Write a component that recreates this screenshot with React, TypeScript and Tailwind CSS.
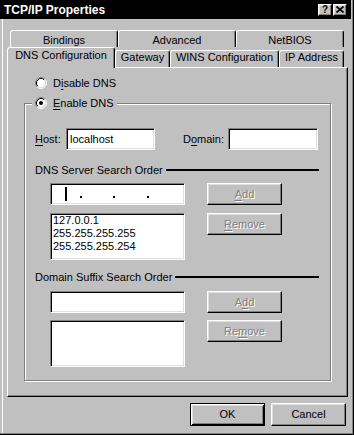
import type { ReactNode } from "react";

// Win95 style "TCP/IP Properties" dialog, DNS tab

const raised =
  "bg-[#c0c0c0] border border-t-white border-l-white border-r-black border-b-black shadow-[inset_-1px_-1px_0_#808080,inset_1px_1px_0_#dfdfdf]";
const sunken =
  "bg-white border border-t-[#808080] border-l-[#808080] border-r-white border-b-white shadow-[inset_1px_1px_0_#000,inset_-1px_-1px_0_#dfdfdf]";
const dimText = "text-[#808080] [text-shadow:1px_1px_0_#fff]";

function Radio({ checked }: { checked?: boolean }) {
  return (
    <svg width="12" height="12" viewBox="0 0 12 12" className="shrink-0">
      <circle cx="6" cy="6" r="4.5" fill="#fff" />
      <path d="M2.11 9.89 A5.5 5.5 0 0 1 9.89 2.11" stroke="#808080" fill="none" />
      <path d="M9.89 2.11 A5.5 5.5 0 0 1 2.11 9.89" stroke="#fff" fill="none" />
      <path d="M2.82 9.18 A4.5 4.5 0 0 1 9.18 2.82" stroke="#000" fill="none" />
      <path d="M9.18 2.82 A4.5 4.5 0 0 1 2.82 9.18" stroke="#dfdfdf" fill="none" />
      {checked && <circle cx="6" cy="6" r="2" fill="#000" />}
    </svg>
  );
}

function U({ children }: { children: ReactNode }) {
  return <span className="underline underline-offset-[2px]">{children}</span>;
}

function SectionHeader({ label }: { label: string }) {
  return (
    <div className="h-[14px] flex items-center pl-[10px] pr-[11px]">
      <span className="whitespace-nowrap">{label}</span>
      <div className="flex-1 h-[2px] bg-black ml-[3px]" />
    </div>
  );
}

function SideButton({ children }: { children: ReactNode }) {
  return (
    <div className={`ml-[22px] w-[75px] h-[22px] flex items-center justify-center ${raised} ${dimText}`}>
      {children}
    </div>
  );
}

export default function App() {
  return (
    <div className="w-[354px] h-[435px] bg-[#c0c0c0] border-r border-b border-black shadow-[inset_-1px_-1px_0_#808080,inset_2px_0_0_#c0c0c0,inset_3px_0_0_#fff] flex flex-col text-[11px] leading-[13px] text-black font-['Liberation_Sans',Arial,sans-serif]">
      {/* Title bar */}
      <div className="h-[19px] mr-[2px] bg-black flex items-center pl-[4px] pr-[4px]">
        <span className="text-white font-bold text-[12px] leading-[14px]">TCP/IP Properties</span>
        <div className="ml-auto flex gap-[1px]">
          <div className={`w-[14px] h-[12px] flex items-center justify-center font-bold text-[10px] leading-[10px] ${raised}`}>
            ?
          </div>
          <div className={`w-[14px] h-[12px] flex items-center justify-center ${raised}`}>
            <svg width="8" height="7" viewBox="0 0 8 7">
              <path d="M0.5 0.5 L7.5 6.5 M7.5 0.5 L0.5 6.5" stroke="#000" strokeWidth="1.6" />
            </svg>
          </div>
        </div>
      </div>

      {/* Back tab row */}
      <div className="mt-[11px] ml-[10px] flex">
        {[
          ["Bindings", "w-[108px]"],
          ["Advanced", "w-[118px]"],
          ["NetBIOS", "w-[108px]"],
        ].map(([label, w]) => (
          <div
            key={label}
            className={`${w} h-[17px] flex justify-center pt-[3px] border-l border-t border-white border-r border-r-black shadow-[inset_-1px_0_0_#808080] rounded-t-[3px]`}
          >
            {label}
          </div>
        ))}
      </div>

      {/* Front tab row */}
      <div className="ml-[7px] h-[20px] flex items-start">
        <div className="relative z-10 w-[108px] h-[21px] bg-[#c0c0c0] flex justify-center pt-[1px] border-l border-t border-white border-r border-r-black shadow-[inset_-1px_0_0_#808080] rounded-t-[3px]">
          DNS Configuration
        </div>
        {[
          ["Gateway", "w-[55px]"],
          ["WINS Configuration", "w-[109px]"],
          ["IP Address", "w-[65px]"],
        ].map(([label, w]) => (
          <div
            key={label}
            className={`${w} mt-[3px] h-[17px] flex justify-center border-l border-t border-white border-r border-r-black shadow-[inset_-1px_0_0_#808080] rounded-t-[3px]`}
          >
            {label}
          </div>
        ))}
      </div>

      {/* Tab panel */}
      <div className="ml-[7px] w-[341px] h-[330px] flex flex-col border border-t-white border-l-white border-r-black border-b-black shadow-[inset_-1px_-1px_0_#808080]">
        <div className="mt-[8px] ml-[27px] h-[14px] flex items-center gap-[6px]">
          <Radio />
          <span>
            D<U>i</U>sable DNS
          </span>
        </div>
        <div className="relative z-10 self-start mt-[6px] ml-[24px] px-[3px] h-[14px] bg-[#c0c0c0] flex items-center gap-[6px]">
          <Radio checked />
          <span>
            <U>E</U>nable DNS
          </span>
        </div>

        {/* Group box */}
        <div className="-mt-[7px] ml-[16px] w-[307px] h-[278px] flex flex-col border border-[#808080] shadow-[inset_1px_1px_0_#fff,1px_1px_0_#fff]">
          <div className="mt-[24px] h-[22px] flex items-center pl-[10px]">
            <span className="w-[31px]">
              <U>H</U>ost:
            </span>
            <div className={`w-[89px] h-[22px] flex items-center pl-[3px] ${sunken}`}>localhost</div>
            <span className="ml-[28px] w-[45px]">
              D<U>o</U>main:
            </span>
            <div className={`w-[90px] h-[22px] ${sunken}`} />
          </div>

          <div className="mt-[13px]">
            <SectionHeader label="DNS Server Search Order" />
          </div>

          <div className="mt-[6px] h-[22px] flex pl-[25px]">
            <div className={`w-[135px] h-[22px] flex items-center pl-[14px] ${sunken}`}>
              <span className="w-[2px] h-[14px] bg-black" />
              <span className="ml-[13px] w-[2px] h-[2px] mt-[6px] bg-black" />
              <span className="ml-[31px] w-[2px] h-[2px] mt-[6px] bg-black" />
              <span className="ml-[32px] w-[2px] h-[2px] mt-[6px] bg-black" />
            </div>
            <SideButton>
              <U>A</U>dd
            </SideButton>
          </div>

          <div className="mt-[8px] flex items-start pl-[25px]">
            <div className={`w-[135px] h-[47px] pl-[2px] flex flex-col ${sunken}`}>
              <span>127.0.0.1</span>
              <span>255.255.255.255</span>
              <span>255.255.255.254</span>
            </div>
            <SideButton>
              <U>R</U>emove
            </SideButton>
          </div>

          <div className="mt-[10px]">
            <SectionHeader label="Domain Suffix Search Order" />
          </div>

          <div className="mt-[7px] h-[22px] flex pl-[25px]">
            <div className={`w-[135px] h-[22px] ${sunken}`} />
            <SideButton>
              A<U>d</U>d
            </SideButton>
          </div>

          <div className="mt-[7px] flex items-start pl-[25px]">
            <div className={`w-[135px] h-[47px] ${sunken}`} />
            <SideButton>
              Re<U>m</U>ove
            </SideButton>
          </div>
        </div>
      </div>

      {/* Dialog buttons */}
      <div className="mt-[6px] mr-[7px] flex justify-end gap-[6px]">
        <div className="w-[75px] h-[23px] flex items-center justify-center bg-[#c0c0c0] border border-black shadow-[inset_1px_1px_0_#fff,inset_-1px_-1px_0_#000,inset_2px_2px_0_#dfdfdf,inset_-2px_-2px_0_#808080]">
          OK
        </div>
        <div className={`w-[75px] h-[23px] flex items-center justify-center ${raised}`}>Cancel</div>
      </div>
    </div>
  );
}
